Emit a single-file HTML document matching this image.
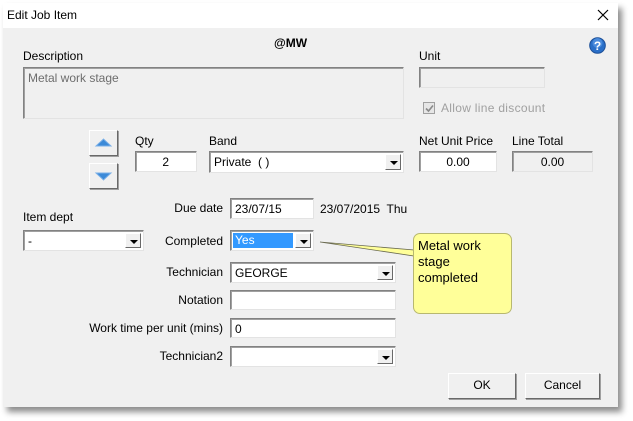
<!DOCTYPE html>
<html><head><style>
*{box-sizing:border-box;margin:0;padding:0}
body{width:633px;height:421px;background:#fff;position:relative;overflow:hidden;font-family:"Liberation Sans",sans-serif;font-size:12px;color:#000}
.a{position:absolute;white-space:nowrap}
#dlg{position:absolute;left:3px;top:3px;width:615px;height:404px;background:#f0f0f0;box-shadow:4px 5px 6px rgba(0,0,0,.45)}
#tb{position:absolute;left:3px;top:3px;width:615px;height:25px;background:#fff}
.box{position:absolute;background:#fff;border:1px solid #828282;border-right-color:#e3e3e3;border-bottom-color:#e3e3e3;box-shadow:inset 1px 1px 0 #a0a0a0;padding:3px 4px;font-size:12px}
.dd{position:absolute;right:2px;top:2px;bottom:2px;width:16px;background:#f0f0f0;border:1px solid #fff;border-right-color:#696969;border-bottom-color:#696969}
.dd:after{content:"";position:absolute;left:4px;top:6px;border-left:4px solid transparent;border-right:4px solid transparent;border-top:4px solid #000}
.r{text-align:right}
.btn{position:absolute;background:#f0f0f0;border:1px solid #fff;border-right-color:#696969;border-bottom-color:#696969;box-shadow:1px 1px 0 #a0a0a0;text-align:center;font-size:12px}
</style></head><body>
<div id="dlg"></div>
<div id="tb"></div>
<div class="a" style="left:7px;top:8px;font-size:12px">Edit Job Item</div>
<svg class="a" style="left:597px;top:9px" width="12" height="12"><path d="M1 1L11 11M11 1L1 11" stroke="#000" stroke-width="1.2"/></svg>
<div class="a" style="left:274px;top:36px;font-weight:bold;font-size:12px">@MW</div>
<svg class="a" style="left:589px;top:37px" width="17" height="17"><circle cx="8.5" cy="8.5" r="7.8" fill="#2a6fc8" stroke="#1c4f98"/><circle cx="8.5" cy="6" r="5" fill="#6aa8f0" opacity=".5"/><text x="8.5" y="13" font-size="12" font-weight="bold" fill="#fff" text-anchor="middle" font-family="Liberation Sans">?</text></svg>
<div class="a" style="left:23px;top:49px">Description</div>
<div class="box" style="left:23px;top:67px;width:381px;height:52px;background:#f0f0f0;color:#6d6d6d">Metal work stage</div>
<div class="a" style="left:419px;top:49px">Unit</div>
<div class="box" style="left:419px;top:67px;width:126px;height:21px;background:#f0f0f0"></div>
<div class="a" style="left:423px;top:102px;width:12px;height:12px;border:1px solid #a0a0a0;background:#e6e6e6"></div>
<svg class="a" style="left:424px;top:103px" width="11" height="11"><path d="M2 5.5L4.5 8L9 2.5" stroke="#8a8a8a" stroke-width="1.6" fill="none"/></svg>
<div class="a" style="left:441px;top:101px;color:#a0a0a0;letter-spacing:.3px">Allow line discount</div>
<div class="btn" style="left:89px;top:130px;width:29px;height:26px"><svg width="27" height="24"><path d="M6 15L13.5 8L21 15Z" fill="#3c8ad8" stroke="#7ab0e8"/></svg></div>
<div class="btn" style="left:89px;top:163px;width:29px;height:26px"><svg width="27" height="24"><path d="M6 9L13.5 16L21 9Z" fill="#3c8ad8" stroke="#7ab0e8"/></svg></div>
<div class="a" style="left:135px;top:134px">Qty</div>
<div class="box r" style="left:135px;top:151px;width:62px;height:21px;padding-right:27px">2</div>
<div class="a" style="left:209px;top:134px">Band</div>
<div class="box" style="left:209px;top:151px;width:195px;height:22px">Private&nbsp; ( )<div class="dd"></div></div>
<div class="a" style="left:419px;top:134px">Net Unit Price</div>
<div class="box" style="left:419px;top:151px;width:78px;height:21px;text-align:center">0.00</div>
<div class="a" style="left:512px;top:134px">Line Total</div>
<div class="box" style="left:512px;top:151px;width:81px;height:21px;text-align:center;background:#f0f0f0">0.00</div>
<div class="a r" style="left:60px;width:163px;top:201px">Due date</div>
<div class="box" style="left:230px;top:198px;width:84px;height:21px">23/07/15</div>
<div class="a" style="left:320px;top:202px">23/07/2015&nbsp; Thu</div>
<div class="a" style="left:23px;top:210px">Item dept</div>
<div class="box" style="left:23px;top:230px;width:121px;height:21px">-<div class="dd"></div></div>
<div class="a r" style="left:60px;width:163px;top:234px">Completed</div>
<div class="box" style="left:230px;top:230px;width:84px;height:21px;padding:2px"><div style="background:#3399ff;color:#fff;width:60px;height:15px;padding:1px 2px;line-height:13px">Yes</div><div class="dd"></div></div>
<svg class="a" style="left:318px;top:238px" width="100" height="22"><path d="M2 4L96 12L96 18Z" fill="#ffff99" stroke="#6a6a50" stroke-width=".8"/></svg>
<div class="a" style="left:413px;top:233px;width:99px;height:81px;background:#ffff99;border:1px solid #b8b870;border-radius:7px;padding:4px 4px;font-size:13px;line-height:16px">Metal work<br>stage<br>completed</div>
<div class="a r" style="left:60px;width:163px;top:265px">Technician</div>
<div class="box" style="left:230px;top:262px;width:166px;height:21px">GEORGE<div class="dd"></div></div>
<div class="a r" style="left:60px;width:163px;top:293px">Notation</div>
<div class="box" style="left:230px;top:290px;width:166px;height:20px"></div>
<div class="a r" style="left:40px;width:183px;top:321px">Work time per unit (mins)</div>
<div class="box" style="left:230px;top:318px;width:166px;height:20px">0</div>
<div class="a r" style="left:60px;width:163px;top:349px">Technician2</div>
<div class="box" style="left:230px;top:346px;width:166px;height:21px"><div class="dd"></div></div>
<div class="btn" style="left:448px;top:373px;width:68px;height:26px;line-height:23px">OK</div>
<div class="btn" style="left:525px;top:373px;width:75px;height:26px;line-height:23px">Cancel</div>
</body></html>
